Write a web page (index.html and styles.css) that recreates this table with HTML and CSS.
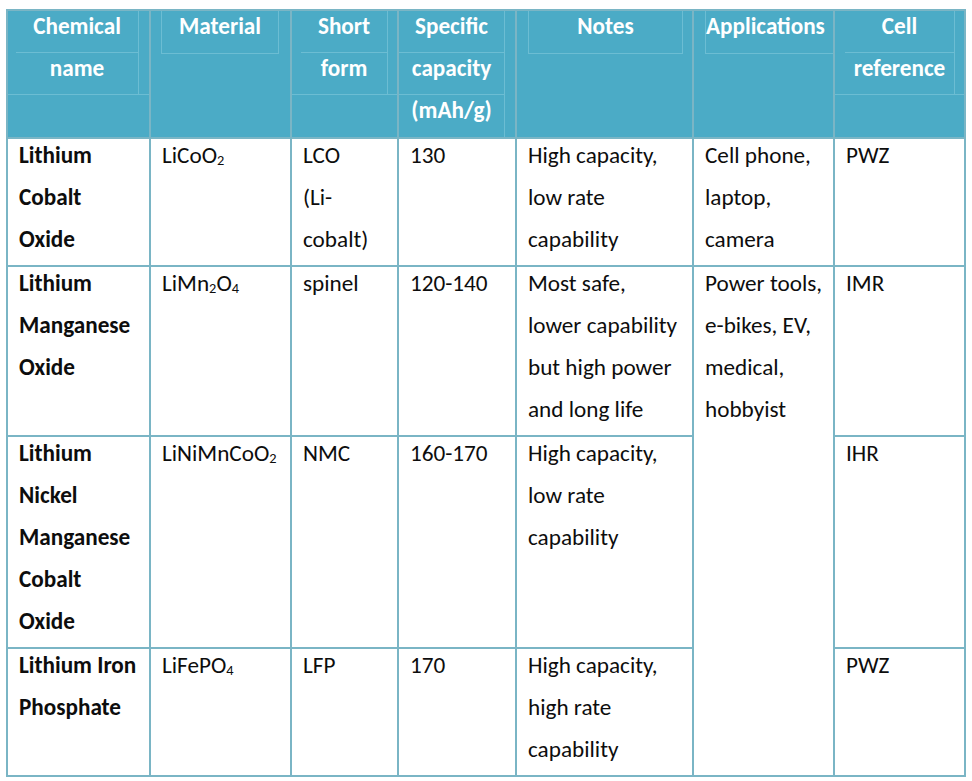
FILE: index.html
```html
<!DOCTYPE html>
<html>
<head>
<meta charset="utf-8">
<link rel="stylesheet" href="styles.css">
</head>
<body>
<div class="page">
<table class="chem">
  <colgroup>
    <col class="c1"><col class="c2"><col class="c3"><col class="c4"><col class="c5"><col class="c6"><col class="c7">
  </colgroup>
  <thead>
    <tr>
      <th>
        <div class="hb-bottom">
          <div class="hin hin-chem"><div class="l ul">Chemical</div><div class="l">name</div></div>
        </div>
      </th>
      <th>
        <div class="hbox hbox-mat"><div class="l">Material</div></div>
      </th>
      <th>
        <div class="hb-bottom">
          <div class="hin hin-short"><div class="l ul">Short</div><div class="l">form</div></div>
        </div>
      </th>
      <th>
        <div class="hin-spec"><div class="l ul">Specific</div><div class="l ul">capacity</div><div class="l">(mAh/g)</div></div>
      </th>
      <th>
        <div class="hbox hbox-notes"><div class="l">Notes</div></div>
      </th>
      <th>
        <div class="hbox hbox-app"><div class="l">Applications</div></div>
      </th>
      <th>
        <div class="hb-bottom">
          <div class="hin hin-cell"><div class="l ul">Cell</div><div class="l">reference</div></div>
        </div>
      </th>
    </tr>
  </thead>
  <tbody>
    <tr>
      <td class="name"><div class="c">Lithium<br>Cobalt<br>Oxide</div></td>
      <td><div class="c">LiCoO<sub>2</sub></div></td>
      <td><div class="c">LCO<br>(Li-<br>cobalt)</div></td>
      <td><div class="c">130</div></td>
      <td><div class="c">High capacity,<br>low rate<br>capability</div></td>
      <td><div class="c">Cell phone,<br>laptop,<br>camera</div></td>
      <td><div class="c">PWZ</div></td>
    </tr>
    <tr>
      <td class="name"><div class="c">Lithium<br>Manganese<br>Oxide</div></td>
      <td><div class="c">LiMn<sub>2</sub>O<sub>4</sub></div></td>
      <td><div class="c">spinel</div></td>
      <td><div class="c">120-140</div></td>
      <td><div class="c">Most safe,<br>lower capability<br>but high power<br>and long life</div></td>
      <td rowspan="3"><div class="c">Power tools,<br>e-bikes, EV,<br>medical,<br>hobbyist</div></td>
      <td><div class="c">IMR</div></td>
    </tr>
    <tr>
      <td class="name"><div class="c">Lithium<br>Nickel<br>Manganese<br>Cobalt<br>Oxide</div></td>
      <td><div class="c">LiNiMnCoO<sub>2</sub></div></td>
      <td><div class="c">NMC</div></td>
      <td><div class="c">160-170</div></td>
      <td><div class="c">High capacity,<br>low rate<br>capability</div></td>
      <td><div class="c">IHR</div></td>
    </tr>
    <tr>
      <td class="name"><div class="c">Lithium Iron<br>Phosphate</div></td>
      <td><div class="c">LiFePO<sub>4</sub></div></td>
      <td><div class="c">LFP</div></td>
      <td><div class="c">170</div></td>
      <td><div class="c">High capacity,<br>high rate<br>capability</div></td>
      <td><div class="c">PWZ</div></td>
    </tr>
  </tbody>
</table>
</div>
</body>
</html>
```

FILE: styles.css
```css
html, body {
  margin: 0;
  padding: 0;
  background: #ffffff;
}

.page {
  padding: 9px 0 0 6px;
}

.chem {
  border-collapse: collapse;
  table-layout: fixed;
  width: 960px;
  font-family: Carlito, Lato, "Liberation Sans", sans-serif;
  font-size: 23.2px;
  line-height: 42px;
  color: #0d0d0d;
}

.c1 { width: 143px; }
.c2 { width: 141px; }
.c3 { width: 107px; }
.c4 { width: 118px; }
.c5 { width: 177px; }
.c6 { width: 141px; }
.c7 { width: 131px; }

.chem th,
.chem td {
  border: 2px solid #7ab5c5;
  padding: 0;
  vertical-align: top;
  text-align: left;
}

.chem th {
  background: #4babc6;
  color: #ffffff;
  font-weight: bold;
  text-align: center;
  height: 126px;
}

.chem td {
  padding: 0 6px 0 11px;
}

.chem td.name {
  font-weight: bold;
}

.c {
  margin: -5px 0 5px;
}

.l {
  height: 42px;
  line-height: 30px;
  white-space: nowrap;
}

/* faint construction lines inside the header cells */
.hb-bottom {
  border-bottom: 1px solid #6cbdd3;
}

.hin {
  border-right: 1px solid #6cbdd3;
}

.hin .l:last-child {
  height: 41px;
}

.ul {
  border-bottom: 1px solid #6cbdd3;
  height: 41px;
}

.hin-chem { margin: 0 10px 0 8px; }
.hin-short { margin: 0 9px 0 9px; }
.hin-cell { margin: 0 9px 0 10px; }

.hin-spec {
  margin-right: 10px;
  border-right: 1px solid #6cbdd3;
  height: 126px;
}

.hbox {
  border-left: 1px solid #6cbdd3;
  border-right: 1px solid #6cbdd3;
  border-bottom: 1px solid #6cbdd3;
}

.hbox .l { height: 42px; }

.hbox-mat { margin: 0 11px 0 10px; }
.hbox-notes { margin: 0 9px 0 11px; }
.hbox-app {
  margin: 0 0 0 11px;
  border-right: none;
  text-align: left;
}

sub {
  font-size: 0.62em;
  line-height: 0;
  vertical-align: -0.15em;
}
```
